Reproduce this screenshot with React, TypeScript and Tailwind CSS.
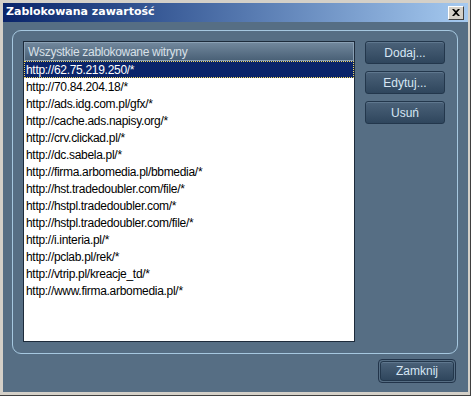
const sites = [
  "http://62.75.219.250/*",
  "http://70.84.204.18/*",
  "http://ads.idg.com.pl/gfx/*",
  "http://cache.ads.napisy.org/*",
  "http://crv.clickad.pl/*",
  "http://dc.sabela.pl/*",
  "http://firma.arbomedia.pl/bbmedia/*",
  "http://hst.tradedoubler.com/file/*",
  "http://hstpl.tradedoubler.com/*",
  "http://hstpl.tradedoubler.com/file/*",
  "http://i.interia.pl/*",
  "http://pclab.pl/rek/*",
  "http://vtrip.pl/kreacje_td/*",
  "http://www.firma.arbomedia.pl/*",
]

const font = { fontFamily: "'Liberation Sans', Arial, sans-serif" }
const titleFont = { fontFamily: "'DejaVu Sans', Tahoma, sans-serif" }

const SlateButton = ({ label, focused }: { label: string; focused?: boolean }) => (
  <div className={focused ? "rounded-[4px] border border-[#22344a] p-px" : ""}>
    <button
      className={
        (focused ? "h-[20px] " : "h-[23px] ") +
        "flex w-full items-center justify-center rounded-[3px] border border-[#23374c] bg-gradient-to-b from-[#4b6279] to-[#2f465d] text-[12px] text-[#d6e6f4] shadow-[inset_0_1px_0_#5f778e]"
      }
      style={font}
    >
      {label}
    </button>
  </div>
)

export default function App() {
  return (
    <div
      className="flex h-[396px] w-[471px] flex-col border-r border-b border-[#404040] bg-[#d4d0c8] pt-[3px] pr-[2px] pb-[3px] pl-[3px]"
      style={font}
    >
      {/* Title bar */}
      <div className="flex h-[19px] items-center justify-between bg-gradient-to-r from-[#0a246a] to-[#a6caf0] pr-[4px] pl-[3px]">
        <span className="text-[11px] font-bold text-white" style={titleFont}>
          Zablokowana zawartość
        </span>
        <div className="flex h-[14px] w-[16px] items-center justify-center border border-t-white border-l-white border-r-[#404040] border-b-[#404040] bg-[#d4d0c8]">
          <svg width="8" height="7" viewBox="0 0 8 7">
            <path d="M0 0h2l2 2 2-2h2L5 3.5 8 7H6L4 5 2 7H0l3-3.5z" fill="#000" />
          </svg>
        </div>
      </div>

      {/* Body */}
      <div className="flex flex-1 flex-col bg-[#566e84] pt-[8px] pr-[10px] pb-[9px] pl-[9px]">
        <div className="flex h-[324px] gap-[10px] rounded-[9px] border border-[#a6c8e0] pt-[10px] pl-[10px]">
          {/* List */}
          <div className="flex h-[301px] w-[332px] flex-col border border-[#1d2b3b] bg-white tracking-[-0.3px]">
            <div className="flex h-[19px] items-center border border-[#8aa0b4] bg-gradient-to-b from-[#71879c] to-[#4a6177] px-[3px] text-[12px] text-[#d8e0e8]">
              Wszystkie zablokowane witryny
            </div>
            {sites.map((s, i) => (
              <div
                key={s}
                className={
                  i === 0
                    ? "flex h-[17px] items-center border border-dotted border-[#f0d860] bg-[#0a246a] pl-[1px] text-[12px] text-white"
                    : "flex h-[17px] items-center pl-[2px] text-[12px] text-black"
                }
              >
                {s}
              </div>
            ))}
          </div>

          {/* Side buttons */}
          <div className="flex w-[80px] flex-col gap-[7px]">
            <SlateButton label="Dodaj..." />
            <SlateButton label="Edytuj..." />
            <SlateButton label="Usuń" />
          </div>
        </div>

        <div className="mt-auto flex justify-end pr-[2px]">
          <div className="w-[78px]">
            <SlateButton label="Zamknij" focused />
          </div>
        </div>
      </div>
    </div>
  )
}
